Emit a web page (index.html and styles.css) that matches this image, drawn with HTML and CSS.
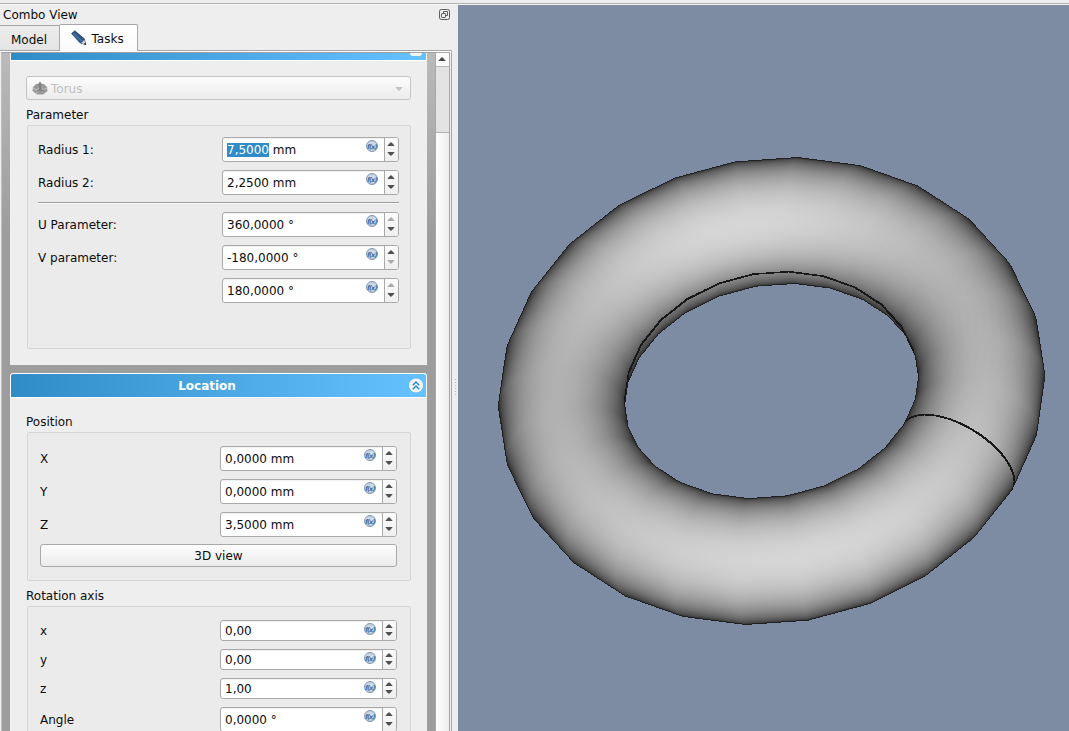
FILE: index.html
```html
<!DOCTYPE html>
<html lang="en">
<head>
<meta charset="utf-8">
<title>Combo View</title>
<link rel="stylesheet" href="styles.css">
</head>
<body>
<svg class="defs" width="0" height="0">
  <defs>
    <linearGradient id="ball" x1="0" y1="0" x2="0" y2="1">
      <stop offset="0" stop-color="#b9cade"/><stop offset=".5" stop-color="#dfe8ee"/><stop offset="1" stop-color="#b4c4d6"/>
    </linearGradient>
    <symbol id="fx" viewBox="0 0 12 12">
      <circle cx="6" cy="6" r="5.5" fill="url(#ball)" stroke="#8298b2" stroke-width="1"/>
      <text x="5.800" y="8.500" text-anchor="middle" class="fx-text">f(x)</text>
    </symbol>
    <symbol id="up" viewBox="0 0 8 4"><path d="M0.3 4 L3.2 .5 H4.8 L7.7 4Z" fill="currentColor"/></symbol>
    <symbol id="down" viewBox="0 0 8 4"><path d="M0.3 0 L3.2 3.5 H4.8 L7.7 0Z" fill="currentColor"/></symbol>
  </defs>
</svg>
<div class="strip"></div>
<div class="main">
  <section class="dock">
    <header class="dock-title">
      <span>Combo View</span>
      <svg class="float" width="11" height="11" viewBox="0 0 11 11" fill="none" stroke="#5c5c58">
        <rect x=".5" y=".5" width="10" height="10" rx="1.8"/>
        <path d="M4.5 4V2.5h4v4H7"/><rect x="2.5" y="4.5" width="4" height="4" rx=".6"/>
      </svg>
    </header>
    <nav class="tabs">
      <div class="tab model">Model</div>
      <div class="tab tasks">
        <svg width="16" height="16" viewBox="0 0 16 16">
          <path d="M.6 3.6 L3.800 .7 L13.300 8.800 L14.800 14.600 L9.200 13Z" fill="#2c5484" stroke="#223c5e" stroke-width=".7"/>
          <path d="M2.3 3.4 L11.300 11.400" stroke="#4573a6" stroke-width="1.600"/>
          <path d="M13.200 9.800 L14.800 14.600 L9.800 13 L11.600 12Z" fill="#dcdcd6"/>
          <path d="M12.800 14 L15.200 15 L14.300 12.800Z" fill="#111"/>
        </svg>
        <span>Tasks</span>
      </div>
    </nav>
    <div class="pane">
      <div class="scroll">
        <div class="panel first">
          <div class="head clipped"><i></i></div>
          <div class="combo">
            <svg width="16" height="15" viewBox="0 0 16 15">
              <path d="M1 6 L4 3 L12 3 L15 6 L15.500 10 L11 13.500 H5 L.5 10Z" fill="#999"/>
              <path d="M1 7 L5 9 L7 7 M15 7 L10 9 M5 9 L4.500 13" stroke="#c0c0c0" fill="none"/>
              <path d="M8 0.500 L10.500 4 L9 4 V8 L13 10.500 L8 9.500 L3.500 11 L7 8 V4 L5.500 4Z" fill="#808080"/>
            </svg>
            <span>Torus</span>
            <svg class="pale" width="8" height="4"><use href="#down"/></svg>
          </div>
          <h3>Parameter</h3>
          <div class="group param">
            <div class="row"><label>Radius 1:</label><div class="spin"><span><mark>7,5000</mark> mm</span><svg class="fx"><use href="#fx"/></svg><b><svg><use href="#up"/></svg><svg><use href="#down"/></svg></b></div></div>
            <div class="row"><label>Radius 2:</label><div class="spin"><span>2,2500 mm</span><svg class="fx"><use href="#fx"/></svg><b><svg><use href="#up"/></svg><svg><use href="#down"/></svg></b></div></div>
            <hr>
            <div class="row"><label>U Parameter:</label><div class="spin"><span>360,0000 °</span><svg class="fx"><use href="#fx"/></svg><b><svg class="off"><use href="#up"/></svg><svg><use href="#down"/></svg></b></div></div>
            <div class="row"><label>V parameter:</label><div class="spin"><span>-180,0000 °</span><svg class="fx"><use href="#fx"/></svg><b><svg><use href="#up"/></svg><svg class="off"><use href="#down"/></svg></b></div></div>
            <div class="row"><label></label><div class="spin"><span>180,0000 °</span><svg class="fx"><use href="#fx"/></svg><b><svg class="off"><use href="#up"/></svg><svg><use href="#down"/></svg></b></div></div>
          </div>
        </div>
        <div class="panel second">
          <div class="head"><span>Location</span>
            <svg width="15" height="15" viewBox="0 0 15 15"><circle cx="7" cy="7.500" r="7" fill="#f4f4f4"/><path d="M3.800 7.200 L7 4 L10.200 7.200 M3.800 11.200 L7 8 L10.200 11.200" fill="none" stroke="#2f8cc8" stroke-width="1.500"/></svg>
          </div>
          <h3>Position</h3>
          <div class="group pos">
            <div class="row"><label>X</label><div class="spin"><span>0,0000 mm</span><svg class="fx"><use href="#fx"/></svg><b><svg><use href="#up"/></svg><svg><use href="#down"/></svg></b></div></div>
            <div class="row"><label>Y</label><div class="spin"><span>0,0000 mm</span><svg class="fx"><use href="#fx"/></svg><b><svg><use href="#up"/></svg><svg><use href="#down"/></svg></b></div></div>
            <div class="row"><label>Z</label><div class="spin"><span>3,5000 mm</span><svg class="fx"><use href="#fx"/></svg><b><svg><use href="#up"/></svg><svg><use href="#down"/></svg></b></div></div>
            <button class="btn">3D view</button>
          </div>
          <h3 class="axis">Rotation axis</h3>
          <div class="group rot">
            <div class="row small"><label>x</label><div class="spin"><span>0,00</span><svg class="fx"><use href="#fx"/></svg><b><svg><use href="#up"/></svg><svg><use href="#down"/></svg></b></div></div>
            <div class="row small"><label>y</label><div class="spin"><span>0,00</span><svg class="fx"><use href="#fx"/></svg><b><svg><use href="#up"/></svg><svg><use href="#down"/></svg></b></div></div>
            <div class="row small"><label>z</label><div class="spin"><span>1,00</span><svg class="fx"><use href="#fx"/></svg><b><svg><use href="#up"/></svg><svg><use href="#down"/></svg></b></div></div>
            <div class="row"><label>Angle</label><div class="spin"><span>0,0000 °</span><svg class="fx"><use href="#fx"/></svg><b><svg><use href="#up"/></svg><svg><use href="#down"/></svg></b></div></div>
          </div>
        </div>
      </div>
      <div class="bar">
        <div class="bar-btn"><svg width="8" height="4"><use href="#up"/></svg></div>
        <div class="track"></div>
        <div class="slider"></div>
      </div>
    </div>
    <div class="grip"></div>
  </section>
  <canvas id="view" class="view" width="611" height="726"></canvas>
</div>
<script src="torus.js"></script>
</body>
</html>
```
FILE: styles.css
```css
* { box-sizing: border-box; }
body {
  margin: 0;
  width: 1069px;
  height: 731px;
  overflow: hidden;
  background: #eee;
  color: #0c0c0c;
  font: 12px/14px "DejaVu Sans", sans-serif;
}
svg { display: block; flex: none; }
.defs { position: absolute; }
.strip { height: 5px; border-top: 3px solid #eee; background: linear-gradient(#b2b2b2 50%, #f6f6f6 50%); }
.main { display: flex; height: 726px; }
.view { display: block; flex: none; width: 611px; height: 726px; background: #7e8ca3; }

.dock {
  flex: none;
  width: 458px;
  height: 726px;
  display: grid;
  grid-template: 19px 27px 680px / 452px 6px;
}
.dock-title { grid-column: 1 / 3; display: flex; justify-content: space-between; padding: 3px 8px 0 3px; }
.float { margin-top: 1px; }
.tabs { grid-column: 1 / 3; display: flex; align-items: flex-end; width: 452px; position: relative; border-bottom: 1px solid #a6a6a6; }
.tab { border: 1px solid #a8a8a8; }
.model { width: 60px; height: 25px; padding: 7px 0 0 11px; background: linear-gradient(#ececec, #e4e4e4); border-left: 0; border-bottom: 0; margin-right: -1px; border-radius: 0 2px 0 0; }
.tasks { display: flex; gap: 4.5px; width: 79px; height: 27px; padding: 5px 0 0 11px; background: linear-gradient(#fff, #fafafa); border-bottom: 0; border-radius: 2px 2px 0 0; margin-bottom: -1px; }
.tasks span { margin-top: 2px; }

.pane { display: flex; height: 680px; border-top: 1px solid #fcfcfc; border-right: 1px solid #a8a8a8; padding-right: 1px; }
.scroll {
  width: 435px;
  height: 679px;
  border-left: 1px solid #c0c0c0;
  border-top: 1px solid #a0a0a0;
  margin-left: 1px;
  padding: 0 8px;
  overflow: hidden;
  background: linear-gradient(#bababa, #9d9d9d 180px, #9d9d9d);
}
.panel { width: 417px; background: #eee; border: 1px solid #f0f0f0; border-width: 0 1px; }
.first { height: 312px; }
.second { height: 400px; margin-top: 8px; border-radius: 4px 4px 0 0; }
.head {
  height: 25px;
  margin: 0 -1px;
  border: 1px solid #fff;
  border-radius: 3px 3px 0 0;
  background: linear-gradient(90deg, #308cc6, #66c2ff);
  color: #fff;
  font-weight: bold;
  display: grid;
  grid-template-columns: 392px 15px;
  align-items: center;
}
.head span { text-align: center; padding-top: 1px; }
.head svg { margin-left: 6px; }
.clipped { height: 8px; border-top: 0; border-radius: 0; align-items: start; }
.clipped i { grid-column: 2; width: 12px; height: 3px; margin-left: 7px; background: #f4f4f4; border-radius: 0 0 6px 6px; }
.combo {
  display: flex;
  height: 24px;
  width: 385px;
  margin: 15px 0 0 15px;
  padding: 4px 7px 0 5px;
  border: 1px solid #c4c4c4;
  border-radius: 3px;
  background: linear-gradient(#fcfcfc, #ececec);
  color: #bebebe;
}
.combo span { flex: 1; padding: 1px 0 0 3px; }
.pale { margin-top: 6px; color: #c4c4c4; }
h3 { margin: 0 0 0 15px; font: inherit; height: 14px; }
.first h3 { margin-top: 8px; }
.second h3 { margin-top: 17px; }
.second h3.axis { margin-top: 8px; }
.group { width: 384px; margin: 3px 0 0 16px; border: 1px solid #d5d5d5; border-radius: 2px; background: #ebebeb; }
.param { height: 224px; padding: 11px 11px 0 10px; }
.pos { height: 149px; padding: 13px 13px 0 12px; }
.rot { height: 160px; padding: 13px 13px 0 12px; }
.row { display: flex; justify-content: space-between; align-items: center; height: 25px; margin-bottom: 8px; }
.row.small { height: 21px; }
hr { height: 2px; margin: -1px 0 8px; border: 0; background: linear-gradient(#9c9c9c 50%, #fbfbfb 50%); }
.spin {
  display: flex;
  width: 177px;
  height: 100%;
  border: 1px solid #a9a9a9;
  border-radius: 3px;
  background: #fff;
  box-shadow: inset 0 1px #f0f0f0;
  overflow: hidden;
}
.spin span { flex: 1; padding: 5px 0 0 4px; white-space: pre; line-height: 14px; }
.small .spin span { padding-top: 3px; }
mark { background: #308cc6; color: #fff; }
.fx { width: 12px; height: 12px; margin: 2px 6px 0 0; }
.fx-text { font: italic bold 6.5px "DejaVu Sans", sans-serif; fill: #44689a; letter-spacing: -.9px; }
.spin b {
  width: 14px;
  border-left: 1px solid #a9a9a9;
  background: linear-gradient(#fbfbfb, #efefef);
  display: flex;
  flex-direction: column;
  align-items: center;
  justify-content: center;
  gap: 6px;
  padding: 0 1px 1px 0;
  color: #505050;
}
.spin b svg { width: 8px; height: 4px; }
.spin b .off { color: #ababab; }
.row.small b { gap: 4px; }
.btn {
  display: block;
  width: 357px;
  height: 23px;
  margin: -1px 0 0;
  padding: 0;
  border: 1px solid #a9a9a9;
  border-radius: 3px;
  background: linear-gradient(#fdfdfd, #ececec);
  font: inherit;
  color: inherit;
}
.bar { width: 15px; height: 679px; border: 1px solid #a8a8a8; border-width: 1px 1px 0; }
.bar-btn { height: 14px; padding: 4px 0 0 2px; background: #fafafa; border-bottom: 1px solid #b5b5b5; color: #484848; }
.track { height: 65px; background: #e3e3e3; }
.slider { height: 600px; border-top: 1px solid #b0b0b0; background: linear-gradient(90deg, #fff, #ececec); }
.grip { width: 1px; height: 17px; margin: 328px 0 0 3px; background: repeating-linear-gradient(#b8b8b8 0 1px, transparent 1px 3px); }
```
FILE: torus.js
```javascript
// Shaded torus seen in orthographic projection, lit from the camera.
(function () {
  var cv = document.getElementById('view');
  var W = cv.width, H = cv.height, ctx = cv.getContext('2d');
  var img = ctx.createImageData(W, H), px = img.data;
  var zb = new Float32Array(W * H).fill(-1e9);
  var CX = 313.6, CY = 386, R = 211.5, r = 63.5;
  var phi = 10.7 * Math.PI / 180, ct = 0.799, st = Math.sqrt(1 - ct * ct);
  var NU = 26, NV = 48, u0 = 36.1 * Math.PI / 180;

  // Maps model axes to the screen: x right, y down, z towards the viewer.
  function toScreen(a, b, c) {
    var m = a, n = b * ct - c * st;
    return [m * Math.cos(phi) + n * Math.sin(phi), -m * Math.sin(phi) + n * Math.cos(phi), b * st + c * ct];
  }
  function vertex(i, j) {
    var u = u0 + i * 2 * Math.PI / NU, v = j * 2 * Math.PI / NV;
    var k = R + r * Math.cos(v);
    var p = toScreen(k * Math.cos(u), k * Math.sin(u), r * Math.sin(v));
    var n = toScreen(Math.cos(v) * Math.cos(u), Math.cos(v) * Math.sin(u), Math.sin(v));
    return [CX + p[0], CY + p[1], p[2], n[2]];
  }
  function put(o, g) { px[o * 4] = px[o * 4 + 1] = px[o * 4 + 2] = g; px[o * 4 + 3] = 255; }
  function tri(a, b, c) {
    var d = (b[0] - a[0]) * (c[1] - a[1]) - (c[0] - a[0]) * (b[1] - a[1]);
    if (Math.abs(d) < 1e-6) return;
    var x0 = Math.floor(Math.min(a[0], b[0], c[0])), x1 = Math.ceil(Math.max(a[0], b[0], c[0]));
    var y0 = Math.floor(Math.min(a[1], b[1], c[1])), y1 = Math.ceil(Math.max(a[1], b[1], c[1]));
    for (var y = y0; y <= y1; y++) for (var x = x0; x <= x1; x++) {
      var X = x + 0.5, Y = y + 0.5;
      var s = ((X - a[0]) * (c[1] - a[1]) - (c[0] - a[0]) * (Y - a[1])) / d;
      var t = ((b[0] - a[0]) * (Y - a[1]) - (X - a[0]) * (b[1] - a[1])) / d;
      if (s < -1e-4 || t < -1e-4 || s + t > 1.0001) continue;
      var z = a[2] + s * (b[2] - a[2]) + t * (c[2] - a[2]), o = y * W + x;
      if (z <= zb[o]) continue;
      zb[o] = z;
      put(o, 28 + 186 * Math.max(0, a[3] + s * (b[3] - a[3]) + t * (c[3] - a[3])));
    }
  }
  function line(a, b) {
    for (var k = 0; k <= 120; k++) {
      var t = k / 120, x = a[0] + t * (b[0] - a[0]), y = a[1] + t * (b[1] - a[1]), z = a[2] + t * (b[2] - a[2]);
      for (var q = 0; q < 4; q++) {
        var o = Math.floor(y - 0.25 + (q >> 1) * 0.5) * W + Math.floor(x - 0.25 + (q & 1) * 0.5);
        if (zb[o] > -1e8 && z + 4 > zb[o]) put(o, 24);
      }
    }
  }
  var i, j;
  for (i = 0; i < NU; i++) for (j = 0; j < NV; j++) {
    var a = vertex(i, j), b = vertex(i + 1, j), c = vertex(i + 1, j + 1), d = vertex(i, j + 1);
    tri(a, b, c);
    tri(a, c, d);
  }
  // Silhouette pixels
  for (var o = W; o < W * H - W; o++) {
    if (zb[o] > -1e8 && (zb[o - 1] < -1e8 || zb[o + 1] < -1e8 || zb[o - W] < -1e8 || zb[o + W] < -1e8)) put(o, 32);
  }
  // Seam circles
  for (i = 0; i < NU; i++) line(vertex(i, NV / 2), vertex(i + 1, NV / 2));
  for (j = 0; j < NV; j++) line(vertex(0, j), vertex(0, j + 1));
  ctx.putImageData(img, 0, 0);
})();
```
